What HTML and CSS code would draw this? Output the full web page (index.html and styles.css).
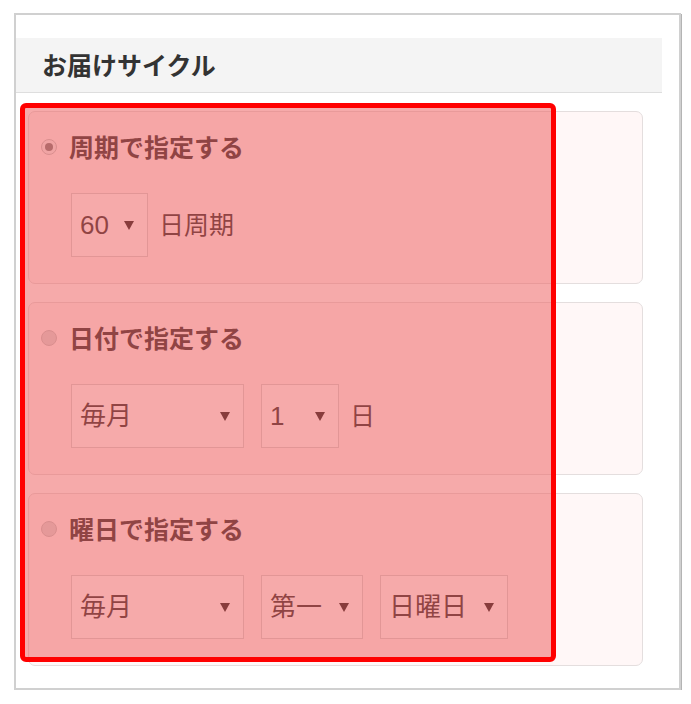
FILE: index.html
```html
<!DOCTYPE html>
<html lang="ja">
<head>
<meta charset="utf-8">
<title>お届けサイクル</title>
<link rel="stylesheet" href="styles.css">
</head>
<body>
<div class="frame">
  <div class="header">
    <h2 class="header-title">お届けサイクル</h2>
  </div>
  <div class="cards">
    <div class="card">
      <div class="option">
        <span class="radio radio-on"><span class="radio-dot"></span></span>
        <span class="option-label">周期で指定する</span>
      </div>
      <div class="controls">
        <div class="select sel-cycle"><span class="sel-text">60</span><span class="caret"></span></div>
        <span class="unit">日周期</span>
      </div>
    </div>
    <div class="card">
      <div class="option">
        <span class="radio"></span>
        <span class="option-label">日付で指定する</span>
      </div>
      <div class="controls">
        <div class="select sel-month"><span class="sel-text">毎月</span><span class="caret"></span></div>
        <div class="select sel-day"><span class="sel-text">1</span><span class="caret"></span></div>
        <span class="unit">日</span>
      </div>
    </div>
    <div class="card">
      <div class="option">
        <span class="radio"></span>
        <span class="option-label">曜日で指定する</span>
      </div>
      <div class="controls">
        <div class="select sel-month"><span class="sel-text">毎月</span><span class="caret"></span></div>
        <div class="select sel-week"><span class="sel-text">第一</span><span class="caret"></span></div>
        <div class="select sel-dow"><span class="sel-text">日曜日</span><span class="caret"></span></div>
      </div>
    </div>
  </div>
  <div class="highlight"></div>
</div>
</body>
</html>
```
FILE: styles.css
```css
* { box-sizing: border-box; }
html, body {
  margin: 0;
  padding: 0;
  background: #ffffff;
}
body {
  font-family: "Liberation Sans", "Noto Sans CJK JP", sans-serif;
  color: #333;
  padding: 13px 0 0 14px;
}
.frame {
  position: relative;
  width: 667px;
  height: 677px;
  border: 2px solid #d0d0d0;
  box-shadow: 1px 1px 0 #b4b4b4;
  padding-top: 23px;
}
.header {
  width: 646px;
  height: 55px;
  background: #f4f4f4;
  border-bottom: 1px solid #dedede;
  display: flex;
  align-items: center;
  padding-left: 26px;
  padding-bottom: 3px;
}
.header-title {
  margin: 0;
  font-family: "Noto Sans CJK JP", sans-serif;
  font-size: 25px;
  font-weight: 700;
  color: #333;
  line-height: 30px;
}
.cards {
  margin: 18px 0 0 12px;
  display: flex;
  flex-direction: column;
  gap: 18px;
  width: 615px;
}
.card {
  height: 173px;
  background: #fff7f7;
  border: 1px solid #e4dede;
  border-radius: 7px;
  padding: 19px 0 0 12px;
}
.option {
  display: flex;
  align-items: center;
  height: 30px;
  gap: 12px;
}
.radio {
  width: 16px;
  height: 16px;
  border-radius: 50%;
  border: 1px solid #c6c6c6;
  background: #dcdcdc;
  display: flex;
  align-items: center;
  justify-content: center;
  flex: none;
  margin-top: 2px;
}
.radio-on {
  background: #f2f2f2;
}
.radio-dot {
  width: 8px;
  height: 8px;
  border-radius: 50%;
  background: #808080;
}
.option-label {
  font-family: "Noto Sans CJK JP", sans-serif;
  font-size: 25px;
  font-weight: 700;
  color: #333;
  line-height: 30px;
}
.controls {
  margin: 32px 0 0 30px;
  display: flex;
  align-items: center;
  gap: 17px;
}
.select {
  height: 64px;
  border: 1px solid #d6d6d6;
  background: #fff;
  display: flex;
  align-items: center;
  justify-content: space-between;
  padding: 0 13px 0 8px;
  flex: none;
}
.sel-cycle { width: 77px; }
.sel-month { width: 173px; }
.sel-day { width: 78px; }
.sel-week { width: 102px; }
.sel-dow { width: 128px; }
.sel-text {
  font-size: 26px;
  line-height: 30px;
  color: #333;
}
.caret {
  width: 0;
  height: 0;
  border-left: 5px solid transparent;
  border-right: 5px solid transparent;
  border-top: 9px solid #222;
}
.unit {
  font-size: 25px;
  line-height: 30px;
  color: #333;
  margin-left: -6px;
}
.highlight {
  position: absolute;
  left: 4px;
  top: 88px;
  width: 536px;
  height: 559px;
  border: 5px solid #ff0000;
  border-radius: 6px;
  background: rgba(238, 85, 85, 0.5);
}
```
